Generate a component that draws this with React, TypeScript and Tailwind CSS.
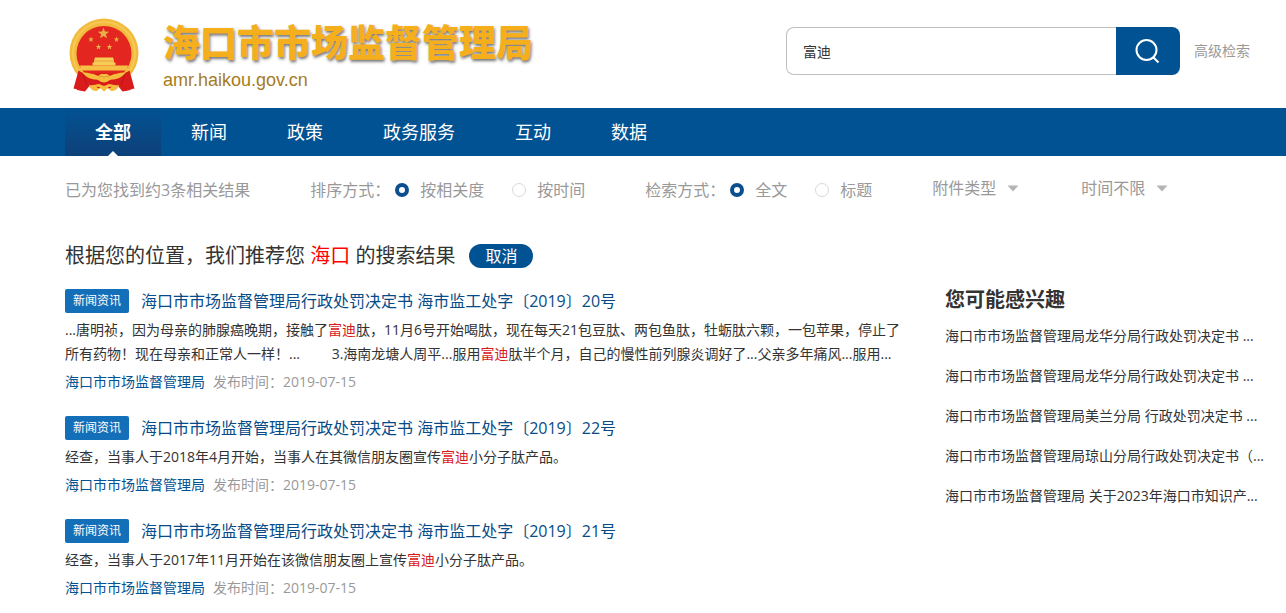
import React, { useState } from 'react';

const navItems = ['全部', '新闻', '政策', '政务服务', '互动', '数据'];

const results = [
  {
    title: '海口市市场监督管理局行政处罚决定书 海市监工处字〔2019〕20号',
    snippet: (
      <>
        ...唐明祯，因为母亲的肺腺癌晚期，接触了<Mark />肽，11月6号开始喝肽，现在每天21包豆肽、两包鱼肽，牡蛎肽六颗，一包苹果，停止了
        <br />
        所有药物！现在母亲和正常人一样！...&emsp;&emsp; 3.海南龙塘人周平...服用<Mark />肽半个月，自己的慢性前列腺炎调好了...父亲多年痛风...服用...
      </>
    ),
  },
  {
    title: '海口市市场监督管理局行政处罚决定书 海市监工处字〔2019〕22号',
    snippet: (
      <>
        经查，当事人于2018年4月开始，当事人在其微信朋友圈宣传<Mark />小分子肽产品。
      </>
    ),
  },
  {
    title: '海口市市场监督管理局行政处罚决定书 海市监工处字〔2019〕21号',
    snippet: (
      <>
        经查，当事人于2017年11月开始在该微信朋友圈上宣传<Mark />小分子肽产品。
      </>
    ),
  },
];

const related = [
  '海口市市场监督管理局龙华分局行政处罚决定书 ...',
  '海口市市场监督管理局龙华分局行政处罚决定书 ...',
  '海口市市场监督管理局美兰分局 行政处罚决定书 ...',
  '海口市市场监督管理局琼山分局行政处罚决定书（...',
  '海口市市场监督管理局 关于2023年海口市知识产...',
];

function Mark() {
  return <em className="not-italic text-[#d8191c]">富迪</em>;
}

function Star({ x, y, r }: { x: number; y: number; r: number }) {
  const points = Array.from({ length: 10 }, (_, i) => {
    const radius = i % 2 ? r * 0.4 : r;
    const angle = (Math.PI / 5) * i - Math.PI / 2;
    return `${x + radius * Math.cos(angle)},${y + radius * Math.sin(angle)}`;
  }).join(' ');
  return <polygon points={points} fill="#e9b04a" />;
}

function Emblem() {
  return (
    <svg viewBox="0 0 70 75" className="w-[70px] h-[75px] shrink-0" role="img" aria-label="国徽">
      <circle cx="35" cy="35" r="34.5" fill="#f2bb3d" />
      <circle cx="35" cy="35" r="31" fill="none" stroke="#f6c955" strokeWidth="2" />
      <circle cx="35" cy="35.5" r="27.5" fill="#e3261f" />
      <Star x={34.5} y={15.5} r={6} />
      <Star x={22} y={21.5} r={3} />
      <Star x={47.5} y={21.5} r={3} />
      <Star x={29.5} y={29} r={3} />
      <Star x={40.5} y={29} r={3} />
      {/* gate tower */}
      <path d="M26 39.5h18l1 3v2h1.500v3H23.500v-3H25v-2z" fill="#f7cb55" />
      <path d="M25 43h20" stroke="#dd9430" strokeWidth="0.7" />
      <path d="M11 47.500h48l-1 5H12z" fill="#f5c044" />
      {/* ribbons, gear and wheat */}
      <path d="M10 53c3 2 7 2.500 13 2.500h24c6 0 10-.5 13-2.500l1.500 19-8 1.500-4-5H20l-4 5-8-1.500z" fill="#d91b1b" />
      <path d="M9.500 52.500L14 56l4 11-3 6-10.500-2.500zM60.500 52.500L56 56l-4 11 3 6 10.500-2.500z" fill="#d91b1b" />
      <path d="M14 56l4 11M56 56l-4 11" stroke="#b31717" strokeWidth="0.8" />
      <path d="M13 54c7 1 13 2 16 4l3-2h6l3 2c3-2 9-3 16-4-3 5-9 7.500-14 7.500-3 0-4 3-8 3s-5-3-8-3c-5 0-11-2.500-14-7.500z" fill="#f5bd3d" />
      <path d="M30 59.500c2-2 3-1 5 0 2-1 3-2 5 0" fill="none" stroke="#dd9430" strokeWidth="1" />
      <path d="M20 67c4 1 7-1 10-1l5 2 5-2c3 0 6 2 10 1-1 4-4 6-8 6l-3-3-4 3.500-4-3.500-3 3c-4 0-7-2-8-6z" fill="#f5bd3d" />
      <path d="M28 69l3 1M42 69l-3 1" stroke="#d91b1b" strokeWidth="1.200" />
    </svg>
  );
}

function SortRadio({ name, label, defaultChecked }: { name: string; label: string; defaultChecked?: boolean }) {
  return (
    <label className="flex items-center gap-[11px] cursor-pointer">
      <input
        type="radio"
        name={name}
        defaultChecked={defaultChecked}
        className="appearance-none w-[14px] h-[14px] rounded-full border border-[#d9d9d9] bg-white checked:border-4 checked:border-[#0b4f8f]"
      />
      {label}
    </label>
  );
}

function FilterSelect({ label }: { label: string }) {
  return (
    <div className="relative">
      <select aria-label={label} className="appearance-none block h-6 pr-[22px] bg-transparent text-base leading-6 cursor-pointer">
        <option>{label}</option>
      </select>
      <svg viewBox="0 0 12 7" className="absolute right-0 top-[9px] w-3 h-[7px] pointer-events-none">
        <path d="M0.500 0.500h11L6 6.500z" fill="#b5b5b5" />
      </svg>
    </div>
  );
}

export default function App() {
  const [active, setActive] = useState('全部');
  const [keyword, setKeyword] = useState('富迪');

  return (
    <div className="bg-white text-[#333] font-['Open_Sans','Noto_Sans_CJK_SC',sans-serif]">
      {/* Header */}
      <header className="h-[108px] pl-[69px] pr-9 flex items-center justify-between">
        <div className="flex items-center gap-6 pt-[2px]">
          <Emblem />
          <div>
            <h1 className="text-[37px] leading-[50px] font-black text-[#f5ae1c] whitespace-nowrap [text-shadow:1px_2px_3px_rgba(60,60,60,0.7)]">
              海口市市场监督管理局
            </h1>
            <p className="font-['Liberation_Sans',sans-serif] text-lg leading-6 text-[#a67c1e]">amr.haikou.gov.cn</p>
          </div>
        </div>
        <form className="flex items-center pb-[6px]" onSubmit={(e) => e.preventDefault()}>
          <input
            type="text"
            aria-label="搜索关键词"
            value={keyword}
            onChange={(e) => setKeyword(e.target.value)}
            className="w-[330px] h-12 px-4 border border-r-0 border-[#bfbfbf] rounded-l-lg text-sm outline-none"
          />
          <button type="submit" aria-label="搜索" className="w-16 h-12 flex items-center justify-center bg-[#015293] rounded-r-lg">
            <svg viewBox="0 0 26 26" className="w-[26px] h-[26px]" fill="none" stroke="#fff" strokeWidth="2">
              <circle cx="11.500" cy="12" r="10" />
              <path d="M18.500 19.500l5 5" />
            </svg>
          </button>
          <a href="#" className="ml-[14px] text-sm text-[#999]">高级检索</a>
        </form>
      </header>

      {/* Channel navigation */}
      <nav className="h-12 pl-[65px] flex bg-[#015293] text-white text-lg">
        {navItems.map((item) => (
          <button
            key={item}
            type="button"
            onClick={() => setActive(item)}
            className={
              item === active
                ? 'relative h-12 px-[30px] font-bold bg-linear-to-b from-[#015293] to-[#0d4078]'
                : 'h-12 px-[30px]'
            }
          >
            {item}
            {item === active && (
              <svg viewBox="0 0 10 5" className="absolute bottom-0 left-[43px] w-[10px] h-[5px]">
                <path d="M0 5l5-5 5 5z" fill="#fff" />
              </svg>
            )}
          </button>
        ))}
      </nav>

      {/* Filters */}
      <div className="pl-[65px] pt-5 flex items-center gap-[60px] text-base leading-6 text-[#999] whitespace-nowrap">
        <p>已为您找到约3条相关结果</p>
        <div className="flex items-center gap-7">
          <div className="flex items-center gap-[5px]">
            <span>排序方式：</span>
            <SortRadio name="sort" label="按相关度" defaultChecked />
          </div>
          <SortRadio name="sort" label="按时间" />
        </div>
        <div className="flex items-center gap-7">
          <div className="flex items-center gap-[5px]">
            <span>检索方式：</span>
            <SortRadio name="scope" label="全文" defaultChecked />
          </div>
          <SortRadio name="scope" label="标题" />
        </div>
        <div className="flex gap-[62px] pb-1">
          <FilterSelect label="附件类型" />
          <FilterSelect label="时间不限" />
        </div>
      </div>

      <main className="pl-[65px] pr-[21px] pt-9">
        <div className="flex items-center gap-[14px]">
          <h2 className="text-xl leading-8">
            根据您的位置，我们推荐您 <span className="text-[#f00]">海口</span> 的搜索结果
          </h2>
          <button type="button" className="w-16 h-6 rounded-full bg-[#015293] text-white text-base leading-6">
            取消
          </button>
        </div>

        <div className="flex gap-10 pt-3">
          <ul className="flex-1 min-w-0 pt-[5px] space-y-[18px]">
            {results.map((item) => (
              <li key={item.title}>
                <div className="flex items-center gap-3 mb-[5px]">
                  <span className="w-16 h-6 rounded-xs bg-[#146fb9] text-white text-xs leading-6 text-center">新闻资讯</span>
                  <a href="#" className="text-base leading-6 text-[#064b87]">{item.title}</a>
                </div>
                <p className="text-sm leading-6">{item.snippet}</p>
                <p className="text-sm leading-8 text-[#999]">
                  <a href="#" className="mr-2 text-[#015293]">海口市市场监督管理局</a>
                  发布时间：2019-07-15
                </p>
              </li>
            ))}
          </ul>

          <aside className="w-80 shrink-0">
            <h3 className="text-xl leading-8 font-bold">您可能感兴趣</h3>
            <ul>
              {related.map((text, i) => (
                <li key={i} className="text-sm leading-10 whitespace-nowrap">
                  <a href="#">{text}</a>
                </li>
              ))}
            </ul>
          </aside>
        </div>
      </main>
    </div>
  );
}
